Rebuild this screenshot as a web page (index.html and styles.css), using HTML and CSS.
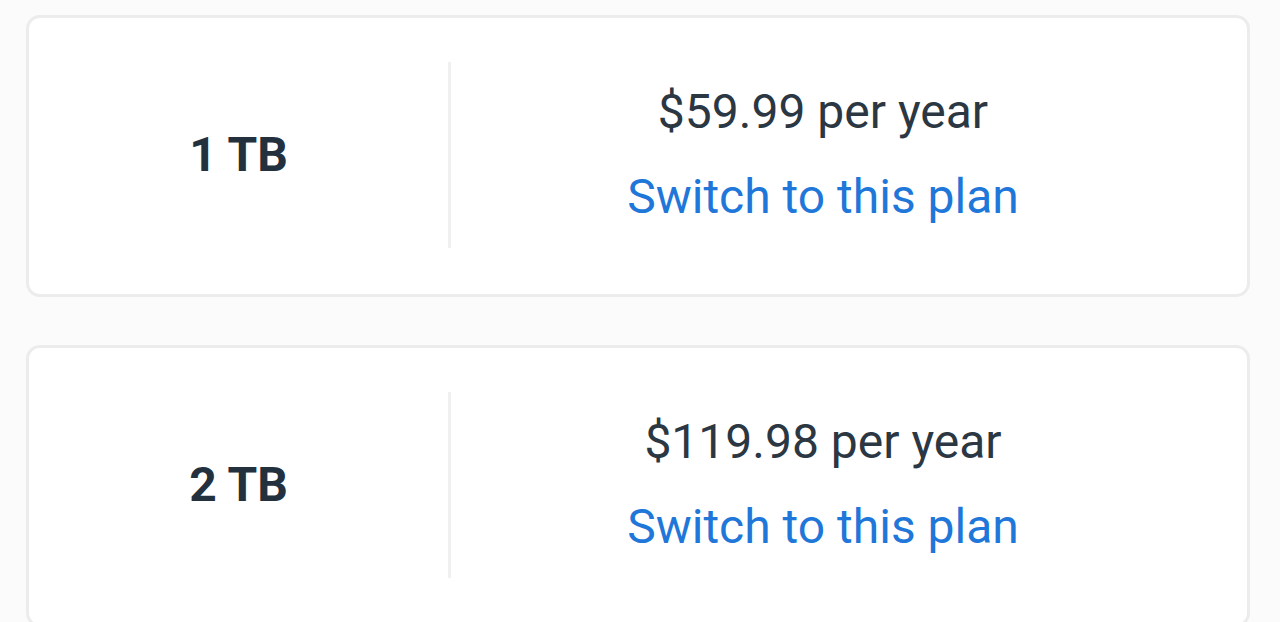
FILE: index.html
```html
<!DOCTYPE html>
<html>
<head>
<meta charset="utf-8">
<link rel="stylesheet" href="styles.css">
</head>
<body>
<div class="list">
  <div class="card">
    <div class="size">1 TB</div>
    <div class="divider"></div>
    <div class="info">
      <div class="price">$59.99 per year</div>
      <a class="switch">Switch to this plan</a>
    </div>
  </div>
  <div class="card">
    <div class="size">2 TB</div>
    <div class="divider"></div>
    <div class="info">
      <div class="price">$119.98 per year</div>
      <a class="switch">Switch to this plan</a>
    </div>
  </div>
</div>
</body>
</html>
```
FILE: styles.css
```css
html, body {
  margin: 0;
  padding: 0;
  background: #fbfbfb;
  font-family: Roboto, "Noto Sans", Arial, sans-serif;
}
.list {
  display: flex;
  flex-direction: column;
  gap: 48px;
  padding: 15px 30px 0 26px;
}
.card {
  display: flex;
  align-items: center;
  box-sizing: border-box;
  height: 282px;
  padding-bottom: 2px;
  background: #fff;
  border: 3px solid #ececec;
  border-radius: 14px;
}
.size {
  width: 419px;
  text-align: center;
  font-size: 48px;
  font-weight: 700;
  color: #23313f;
  padding-bottom: 2px;
}
.divider {
  width: 3px;
  height: 186px;
  background: #f0f0f0;
}
.info {
  flex: 1;
  display: flex;
  flex-direction: column;
  align-items: center;
  padding-right: 52px;
  padding-bottom: 2px;
  font-size: 48px;
  line-height: 85px;
}
.price {
  color: #2b3742;
}
.switch {
  color: #1f77d9;
  text-decoration: none;
}
```
